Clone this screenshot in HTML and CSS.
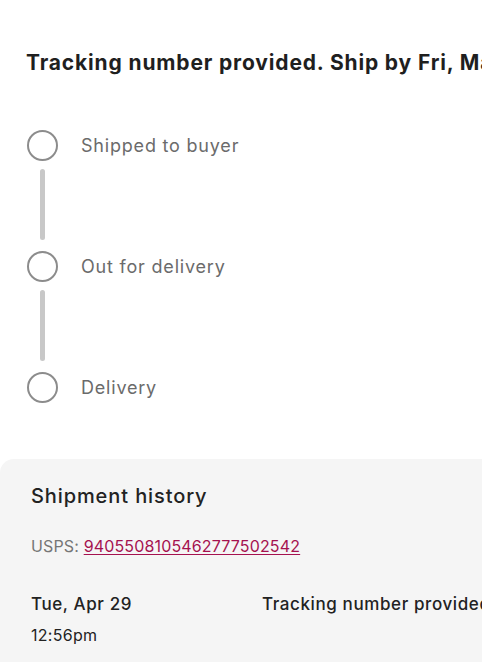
FILE: index.html
```html
<!DOCTYPE html>
<html lang="en">
<head>
<meta charset="utf-8">
<title>Tracking</title>
<link rel="stylesheet" href="styles.css">
</head>
<body>
<main class="page">
  <h1 class="title">Tracking number provided. Ship by Fri, May 2</h1>
  <ol class="steps">
    <li class="step"><span class="dot"></span><span class="label">Shipped to buyer</span></li>
    <li class="connector"><span class="bar"></span></li>
    <li class="step"><span class="dot"></span><span class="label">Out for delivery</span></li>
    <li class="connector"><span class="bar"></span></li>
    <li class="step"><span class="dot"></span><span class="label">Delivery</span></li>
  </ol>
  <section class="history">
    <h2 class="history-title">Shipment history</h2>
    <p class="carrier">USPS: <a class="tracking-link" href="#">9405508105462777502542</a></p>
    <div class="event">
      <div class="when">
        <div class="date">Tue, Apr 29</div>
        <div class="time">12:56pm</div>
      </div>
      <div class="what">Tracking number provided</div>
    </div>
  </section>
</main>
</body>
</html>
```
FILE: styles.css
```css
html, body {
  margin: 0;
  padding: 0;
  background: #ffffff;
  overflow: hidden;
}
body {
  font-family: Inter, "Noto Sans", sans-serif;
  color: #222222;
  width: 482px;
  height: 662px;
}
.page {
  width: 700px;
}
.title {
  margin: 49px 0 0 26px;
  font-size: 21px;
  line-height: 28px;
  font-weight: 700;
  color: #1f1f1f;
  white-space: nowrap;
  letter-spacing: 0.85px;
}
.steps {
  list-style: none;
  margin: 53px 0 0 27px;
  padding: 0;
}
.step {
  display: flex;
  align-items: center;
  height: 31px;
}
.dot {
  width: 27px;
  height: 27px;
  border: 2px solid #8c8c8c;
  border-radius: 50%;
  flex: none;
}
.label {
  margin-left: 23px;
  font-size: 18px;
  color: #6b6b6b;
  letter-spacing: 0.8px;
}
.connector {
  height: 90px;
  display: flex;
  flex-direction: column;
  padding-left: 13px;
}
.bar {
  margin-top: 8px;
  width: 5px;
  height: 71px;
  border-radius: 3px;
  background: #c8c8c8;
}
.history {
  margin-top: 56px;
  background: #f5f5f5;
  border-top-left-radius: 14px;
  padding: 24px 0 30px 31px;
  min-height: 220px;
}
.history-title {
  margin: 0;
  font-size: 20px;
  line-height: 26px;
  font-weight: 500;
  color: #222222;
  letter-spacing: 0.9px;
}
.carrier {
  margin: 25px 0 0 0;
  font-size: 16px;
  line-height: 24px;
  color: #767676;
  letter-spacing: 0.15px;
}
.tracking-link {
  color: #a5124f;
  text-decoration: underline;
  text-underline-offset: 2px;
}
.event {
  display: flex;
  margin-top: 34px;
}
.when {
  width: 231px;
  flex: none;
}
.date {
  font-size: 17px;
  line-height: 24px;
  color: #222222;
  font-weight: 500;
  letter-spacing: 0.6px;
}
.time {
  margin-top: 8px;
  font-size: 16px;
  line-height: 22px;
  color: #222222;
  letter-spacing: 0.3px;
}
.what {
  font-size: 17px;
  line-height: 24px;
  color: #222222;
  font-weight: 500;
  white-space: nowrap;
  letter-spacing: 0.6px;
}
```
